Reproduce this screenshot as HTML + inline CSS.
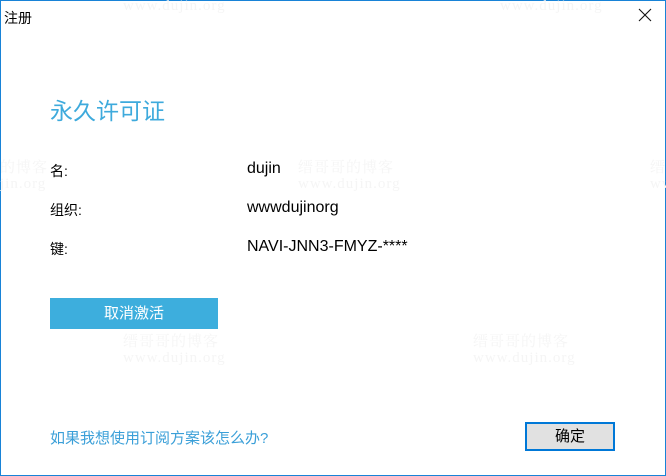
<!DOCTYPE html>
<html><head><meta charset="utf-8"><style>
html,body{margin:0;padding:0}
body{width:666px;height:476px;position:relative;overflow:hidden;background:#fff;font-family:"Liberation Sans","Noto Sans CJK SC",sans-serif;}
.frame{position:absolute;left:0;top:0;width:664px;height:474px;border:1px solid #1883d7;}
.a{position:absolute;white-space:nowrap}
.wm{position:absolute;color:#f5f5f5;font-family:"Liberation Serif","Noto Serif CJK SC",serif;font-size:15px;line-height:16px;letter-spacing:1px}
</style></head><body>
<div class="frame"></div>
<div class="wm" style="left:123px;top:-2px">www.dujin.org</div>
<div class="wm" style="left:500px;top:-2px">www.dujin.org</div>
<div class="wm" style="left:0;top:160px">的博客<br>jin.org</div>
<div class="wm" style="left:298px;top:160px">缙哥哥的博客<br>www.dujin.org</div>
<div class="wm" style="left:650px;top:160px">缙哥<br>www.</div>
<div class="wm" style="left:123px;top:334px">缙哥哥的博客<br>www.dujin.org</div>
<div class="wm" style="left:473px;top:334px">缙哥哥的博客<br>www.dujin.org</div>
<div class="a" style="left:4px;top:8px;font-size:14px;color:#000">注册</div>
<svg class="a" style="left:638px;top:8px" width="14" height="14"><path d="M1 1L13 13M13 1L1 13" stroke="#111" stroke-width="1.1"/></svg>
<div class="a" style="left:50px;top:92px;font-size:23px;color:#3eaadc">永久许可证</div>
<div class="a" style="left:50px;top:161px;font-size:14px">名:</div>
<div class="a" style="left:50px;top:200px;font-size:14px">组织:</div>
<div class="a" style="left:50px;top:239px;font-size:14px">键:</div>
<div class="a" style="left:247px;top:160px;font-size:16px">dujin</div>
<div class="a" style="left:247px;top:199px;font-size:16px">wwwdujinorg</div>
<div class="a" style="left:247px;top:238px;font-size:16px">NAVI-JNN3-FMYZ-****</div>
<div class="a" style="left:50px;top:298px;width:168px;height:31px;background:#3daedd;color:#fff;font-size:15px;line-height:31px;text-align:center">取消激活</div>
<div class="a" style="left:50px;top:427px;font-size:15px;color:#3a9fd8">如果我想使用订阅方案该怎么办?</div>
<div class="a" style="left:525px;top:422px;width:86px;height:25px;border:2px solid #0078d7;background:#e1e1e1;font-size:15px;line-height:25px;text-align:center">确定</div>
</body></html>
